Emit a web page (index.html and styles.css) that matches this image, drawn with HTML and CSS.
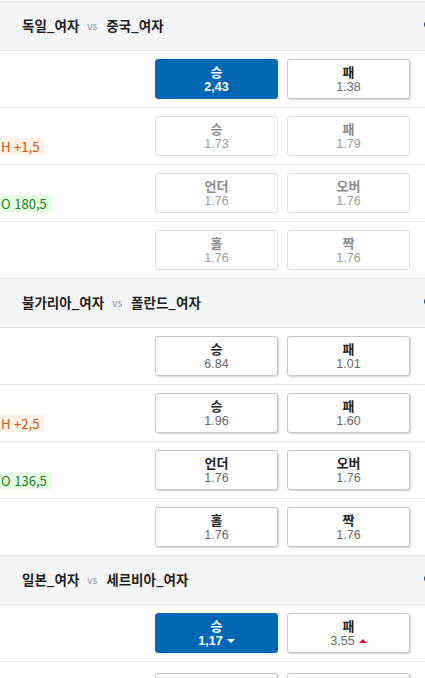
FILE: index.html
```html
<!DOCTYPE html>
<html lang="ko">
<head>
  <meta charset="UTF-8" />
  <meta name="viewport" content="width=device-width, initial-scale=1.0"/>
  <title>배구 경기 배당</title>
  <link rel="stylesheet" href="styles.css">
</head>
<body>
  <div class="board">

    <!-- 경기 1 -->
    <section class="match">
      <div class="match-head">
        <span class="team">독일_여자</span><span class="vs">vs</span><span class="team">중국_여자</span>
        <span class="more"></span>
      </div>
      <div class="market">
        <div class="market-label"></div>
        <div class="odds">
          <button class="pick selected"><b>승</b><span>2,43</span></button>
          <button class="pick"><b>패</b><span>1.38</span></button>
        </div>
      </div>
      <div class="market">
        <div class="market-label"><span class="tag handicap">H +1,5</span></div>
        <div class="odds">
          <button class="pick locked"><b>승</b><span>1.73</span></button>
          <button class="pick locked"><b>패</b><span>1.79</span></button>
        </div>
      </div>
      <div class="market">
        <div class="market-label"><span class="tag total">O 180,5</span></div>
        <div class="odds">
          <button class="pick locked"><b>언더</b><span>1.76</span></button>
          <button class="pick locked"><b>오버</b><span>1.76</span></button>
        </div>
      </div>
      <div class="market">
        <div class="market-label"></div>
        <div class="odds">
          <button class="pick locked"><b>홀</b><span>1.76</span></button>
          <button class="pick locked"><b>짝</b><span>1.76</span></button>
        </div>
      </div>
    </section>

    <!-- 경기 2 -->
    <section class="match">
      <div class="match-head">
        <span class="team">불가리아_여자</span><span class="vs">vs</span><span class="team">폴란드_여자</span>
        <span class="more"></span>
      </div>
      <div class="market">
        <div class="market-label"></div>
        <div class="odds">
          <button class="pick"><b>승</b><span>6.84</span></button>
          <button class="pick"><b>패</b><span>1.01</span></button>
        </div>
      </div>
      <div class="market">
        <div class="market-label"><span class="tag handicap">H +2,5</span></div>
        <div class="odds">
          <button class="pick"><b>승</b><span>1.96</span></button>
          <button class="pick"><b>패</b><span>1.60</span></button>
        </div>
      </div>
      <div class="market">
        <div class="market-label"><span class="tag total">O 136,5</span></div>
        <div class="odds">
          <button class="pick"><b>언더</b><span>1.76</span></button>
          <button class="pick"><b>오버</b><span>1.76</span></button>
        </div>
      </div>
      <div class="market">
        <div class="market-label"></div>
        <div class="odds">
          <button class="pick"><b>홀</b><span>1.76</span></button>
          <button class="pick"><b>짝</b><span>1.76</span></button>
        </div>
      </div>
    </section>

    <!-- 경기 3 -->
    <section class="match">
      <div class="match-head">
        <span class="team">일본_여자</span><span class="vs">vs</span><span class="team">세르비아_여자</span>
        <span class="more"></span>
      </div>
      <div class="market">
        <div class="market-label"></div>
        <div class="odds">
          <button class="pick selected"><b>승</b><span>1,17 <i class="down"></i></span></button>
          <button class="pick"><b>패</b><span>3.55 <i class="up"></i></span></button>
        </div>
      </div>
      <div class="market next">
        <div class="market-label"></div>
        <div class="odds">
          <button class="pick"></button>
          <button class="pick"></button>
        </div>
      </div>
    </section>

  </div>
</body>
</html>
```

FILE: styles.css
```css
body {
  font-family: "Noto Sans CJK KR", "Noto Sans", sans-serif;
  font-size: 13px;
  margin: 0;
  padding: 0;
  background-color: #fff;
  color: #222;
  overflow: hidden;
}

.board {
  margin-top: 1px;
  border-top: 1px solid #e3e4e8;
}

.match-head {
  display: flex;
  align-items: center;
  height: 49px;
  padding-left: 22px;
  padding-bottom: 3px;
  box-sizing: border-box;
  background-color: #f4f5f7;
  border-bottom: 1px solid #e3e4e8;
}

.team {
  font-size: 13.5px;
  font-weight: bold;
  line-height: 16px;
  color: #1e1e1e;
}

.vs {
  font-size: 10px;
  color: #8a8fac;
  margin: 1px 9px 0 8px;
}

.more {
  margin-left: auto;
  margin-right: -9px;
  width: 10px;
  height: 9px;
  border-radius: 50%;
  background-color: #3b4263;
}

.market {
  display: flex;
  align-items: center;
  justify-content: space-between;
  height: 56px;
  padding-right: 15px;
  border-bottom: 1px solid #e6e6e6;
}

.market.next {
  align-items: flex-start;
  padding-top: 11px;
  box-sizing: border-box;
}

.market-label {
  margin-top: 20px;
}

.tag {
  display: inline-block;
  margin-left: -4px;
  padding: 0 5px;
  line-height: 17px;
  font-size: 13px;
}

.tag.handicap {
  color: #c4531c;
  background-color: #fff1e3;
}

.tag.total {
  color: #1d7d22;
  background-color: #e4fbe4;
}

.odds {
  display: flex;
  gap: 9px;
}

.pick {
  box-sizing: border-box;
  width: 123px;
  height: 40px;
  padding: 0;
  display: flex;
  flex-direction: column;
  align-items: center;
  justify-content: center;
  font-family: inherit;
  background-color: #fff;
  border: 1px solid #c6c6c6;
  border-radius: 3px;
  box-shadow: 1px 1px 2px rgba(0,0,0,0.18);
  cursor: pointer;
}

.pick b {
  font-size: 13px;
  line-height: 16px;
  color: #222;
}

.pick span {
  font-family: "Liberation Sans", Arial, sans-serif;
  font-size: 12.5px;
  line-height: 15px;
  color: #666;
  display: flex;
  align-items: center;
  gap: 4px;
}

.pick.selected {
  background-color: #0067b4;
  border-color: #0067b4;
  box-shadow: none;
}

.pick.selected b,
.pick.selected span {
  color: #fff;
  font-weight: bold;
}

.pick.locked {
  border-color: #dedede;
  box-shadow: none;
}

.pick.locked b {
  color: #8a8a8a;
}

.pick.locked span {
  color: #9a9a9a;
}

.down {
  width: 0;
  height: 0;
  border-left: 4px solid transparent;
  border-right: 4px solid transparent;
  border-top: 4px solid #fff;
}

.up {
  width: 0;
  height: 0;
  border-left: 4px solid transparent;
  border-right: 4px solid transparent;
  border-bottom: 4px solid #d4112e;
}
```
